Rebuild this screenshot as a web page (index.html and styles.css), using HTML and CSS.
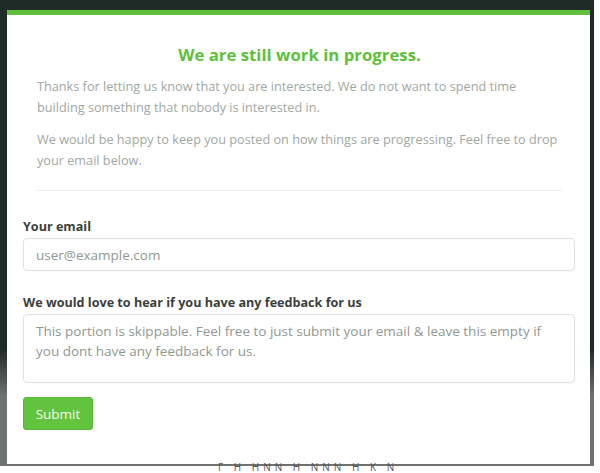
FILE: index.html
```html
<!DOCTYPE html>
<html>
<head>
<meta charset="utf-8">
<link rel="stylesheet" href="styles.css">
</head>
<body>
<div class="backdrop">
  <div class="modal">
    <div class="intro">
      <h1 class="title">We are still work in progress.</h1>
      <p class="text">Thanks for letting us know that you are interested. We do not want to spend time building something that nobody is interested in.</p>
      <p class="text">We would be happy to keep you posted on how things are progressing. Feel free to drop your email below.</p>
      <hr class="divider">
    </div>
    <form class="form">
      <label class="label" for="email">Your email</label>
      <input class="input" id="email" type="text" placeholder="user@example.com">
      <label class="label label-2" for="fb">We would love to hear if you have any feedback for us</label>
      <textarea class="textarea" id="fb" placeholder="This portion is skippable. Feel free to just submit your email &amp; leave this empty if you dont have any feedback for us."></textarea>
      <div class="actions"><button class="btn" type="button">Submit</button></div>
    </form>
  </div>
</div>
<div class="under">Γ Η ΗΝΝ Η ΝΝΝ Η Κ Ν</div>
</body>
</html>
```
FILE: styles.css
```css
html, body {
  margin: 0;
  padding: 0;
  background: #ffffff;
  font-family: "Open Sans", "Noto Sans", sans-serif;
  width: 600px;
  height: 473px;
  overflow: hidden;
}
.backdrop {
  width: 583px;
  padding: 10px 4px 2px 7px;
  background: linear-gradient(to bottom, #1f2b26 0%, #1f2b26 75%, #6e736f 85%, #6e736f 100%);
  box-sizing: content-box;
}
.modal {
  width: 583px;
  height: 454px;
  background: #ffffff;
  border-top: 5px solid #5fc03c;
  box-sizing: border-box;
  display: flex;
  flex-direction: column;
}
.intro {
  padding: 0 28px 0 30px;
}
.title {
  margin: 29px 0 0;
  text-align: center;
  color: #5fc03c;
  font-size: 16.8px;
  font-weight: 700;
  line-height: 22px;
}
.text {
  margin: 10px 0 0;
  color: #a0a8a1;
  font-size: 12.7px;
  line-height: 21px;
}
.text + .text {
  margin-top: 11px;
}
.divider {
  margin: 19px 0 0;
  border: 0;
  border-top: 1px solid #eceeec;
}
.form {
  padding: 27px 15px 0 16px;
  display: flex;
  flex-direction: column;
}
.label {
  color: #3a3f3b;
  font-size: 12.6px;
  font-weight: 700;
  line-height: 18px;
  margin-bottom: 2px;
}
.label-2 {
  margin-top: 23px;
}
.input, .textarea {
  box-sizing: border-box;
  width: 100%;
  border: 1px solid #dde2de;
  border-radius: 4px;
  font-family: "Open Sans", "Noto Sans", sans-serif;
  font-size: 13.5px;
  color: #333;
  padding: 6px 12px;
  outline: none;
  background: #fff;
}
.input {
  height: 33px;
}
.textarea {
  height: 69px;
  resize: none;
  line-height: 20px;
  padding-top: 6px;
}
.input::placeholder, .textarea::placeholder {
  color: #8f9891;
  opacity: 1;
}
.actions {
  margin-top: 14px;
}
.btn {
  background: #62c33f;
  color: #f4fbf1;
  border: 1px solid #5ab937;
  border-radius: 3px;
  font-family: "Open Sans", "Noto Sans", sans-serif;
  font-size: 13.5px;
  width: 70px;
  height: 33px;
  padding: 0;
}
.under {
  margin: -4px 0 0 218px;
  font-size: 10px;
  color: #555;
  letter-spacing: 4px;
  line-height: 10px;
}
```
